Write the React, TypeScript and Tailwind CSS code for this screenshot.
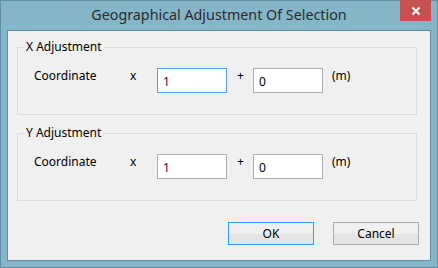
const font = { fontFamily: '"Noto Sans", "Open Sans", sans-serif' };

interface GroupProps {
  title: string;
  first: string;
  second: string;
  focused?: boolean;
}

function AdjustmentGroup({ title, first, second, focused }: GroupProps) {
  return (
    <div className="relative h-[68px] border border-[#dcdcdc] pl-[16px] pt-[20px]">
      <span className="absolute left-[6px] top-[-10px] bg-[#f0f0f0] px-[2px] text-[12px] leading-[17px] text-black">
        {title}
      </span>
      <div className="flex items-start text-[12px] leading-[17px] text-black">
        <span className="mt-[-1px] w-[96px]">Coordinate</span>
        <span className="mt-[-1px] w-[27px]">x</span>
        <div
          className={
            "flex h-[25px] w-[70px] items-center border bg-white pl-[5px] pt-[2px] text-[#3c0a3c] " +
            (focused ? "border-[#569de5]" : "border-[#abadb3]")
          }
        >
          {first}
        </div>
        <span className="mt-[-1px] w-[26px] pl-[10px]">+</span>
        <div className="flex h-[25px] w-[70px] items-center border border-[#abadb3] bg-white pl-[5px] pt-[2px]">
          {second}
        </div>
        <span className="ml-[9px] mt-[-1px]">(m)</span>
      </div>
    </div>
  );
}

export default function App() {
  return (
    <div
      className="flex h-[268px] w-[438px] flex-col border border-[#5f8fa2] bg-[#84b5c8]"
      style={font}
    >
      <div className="relative flex h-[29px] items-center justify-center">
        <span className="mt-[-1px] text-[14.3px] text-[#2b2b2b]">
          Geographical Adjustment Of Selection
        </span>
        <button
          className="absolute right-[6px] top-[-1px] flex h-[21px] w-[31px] items-center justify-center bg-[#c75050] text-white"
          type="button"
        >
          <svg height="10" viewBox="0 0 10 10" width="10">
            <path d="M1.5 1.5 L8.5 8.5 M8.5 1.5 L1.5 8.5" stroke="white" strokeWidth="2" />
          </svg>
        </button>
      </div>
      <div className="mx-[6px] mb-[6px] flex flex-1 flex-col border border-[#5f8fa2] bg-[#f0f0f0] pl-[9px] pr-[13px] pt-[16px]">
        <AdjustmentGroup first="1" focused second="0" title="X Adjustment" />
        <div className="mt-[18px]">
          <AdjustmentGroup first="1" second="0" title="Y Adjustment" />
        </div>
        <div className="mr-[-2px] mt-[21px] flex justify-end gap-[19px] text-[12px] text-black">
          <button
            className="h-[23px] w-[86px] border border-[#3399ff] bg-[linear-gradient(#f0f0f0_50%,#e5e5e5_50%)]"
            type="button"
          >
            OK
          </button>
          <button
            className="h-[23px] w-[86px] border border-[#acacac] bg-[linear-gradient(#f0f0f0_50%,#e5e5e5_50%)]"
            type="button"
          >
            Cancel
          </button>
        </div>
      </div>
    </div>
  );
}
